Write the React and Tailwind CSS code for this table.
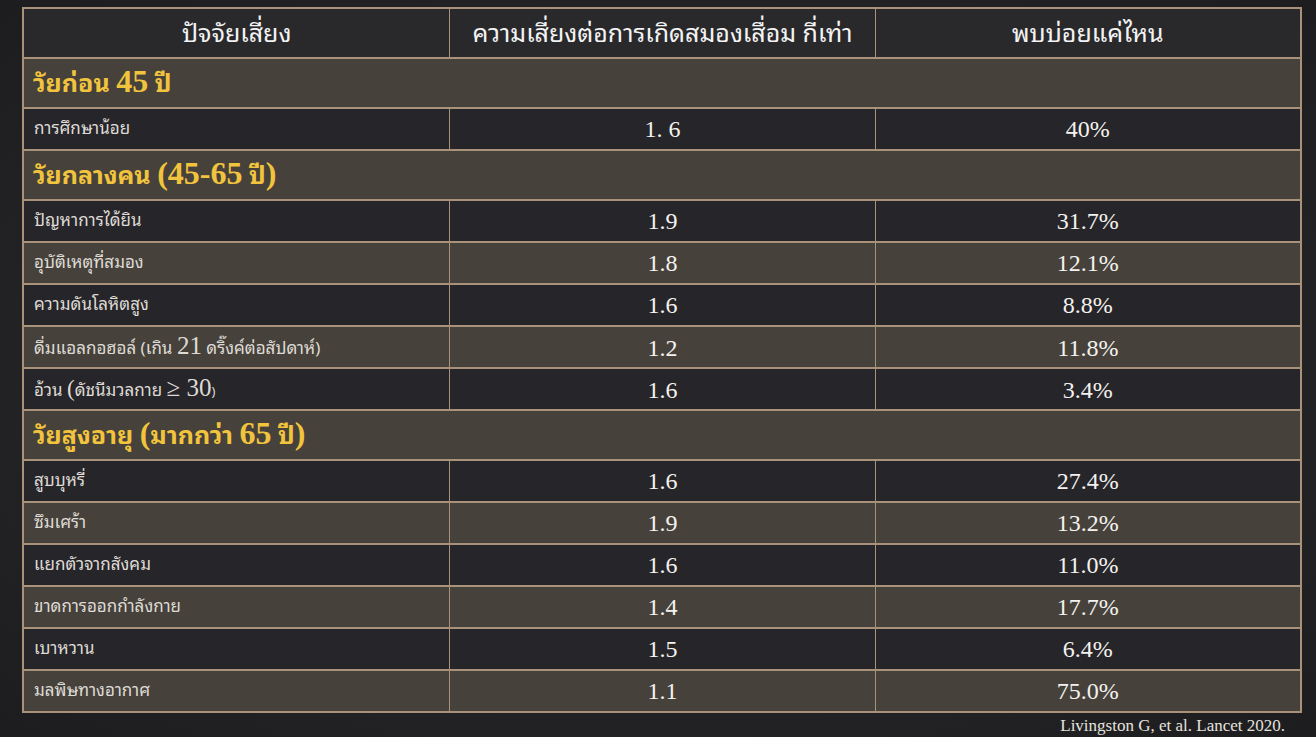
import React from "react";

const thai =
  "font-['Noto_Sans_Thai_Looped','Loma','Garuda','Waree','Tahoma','Noto_Sans_Thai','DejaVu_Sans',sans-serif]";
const serif = "font-['Liberation_Serif','Times_New_Roman',serif]";

function Num({ children, className = "" }) {
  return <span className={`${serif} ${className}`}>{children}</span>;
}

const rows = [
  {
    type: "section",
    label: (
      <>
        วัยก่อน <Num className="text-[32px] font-bold">45</Num> ปี
      </>
    ),
  },
  { label: "การศึกษาน้อย", risk: "1. 6", freq: "40%" },
  {
    type: "section",
    label: (
      <>
        วัยกลางคน <Num className="text-[32px] font-bold">(45-65</Num> ปี
        <Num className="text-[32px] font-bold">)</Num>
      </>
    ),
  },
  { label: "ปัญหาการได้ยิน", risk: "1.9", freq: "31.7%" },
  { label: "อุบัติเหตุที่สมอง", risk: "1.8", freq: "12.1%" },
  { label: "ความดันโลหิตสูง", risk: "1.6", freq: "8.8%" },
  {
    label: (
      <>
        ดื่มแอลกอฮอล์ (เกิน <Num className="text-[25px]">21</Num> ดริ๊งค์ต่อสัปดาห์)
      </>
    ),
    risk: "1.2",
    freq: "11.8%",
  },
  {
    label: (
      <>
        อ้วน <Num className="text-[23px]">(</Num>ดัชนีมวลกาย{" "}
        <Num className="text-[25px]">≥ 30</Num>
        <span className="text-[13px]">)</span>
      </>
    ),
    risk: "1.6",
    freq: "3.4%",
  },
  {
    type: "section",
    label: (
      <>
        วัยสูงอายุ <Num className="text-[32px] font-bold">(</Num>มากกว่า{" "}
        <Num className="text-[32px] font-bold">65</Num> ปี
        <Num className="text-[32px] font-bold">)</Num>
      </>
    ),
  },
  { label: "สูบบุหรี่", risk: "1.6", freq: "27.4%" },
  { label: "ซึมเศร้า", risk: "1.9", freq: "13.2%" },
  { label: "แยกตัวจากสังคม", risk: "1.6", freq: "11.0%" },
  { label: "ขาดการออกกำลังกาย", risk: "1.4", freq: "17.7%" },
  { label: "เบาหวาน", risk: "1.5", freq: "6.4%" },
  { label: "มลพิษทางอากาศ", risk: "1.1", freq: "75.0%" },
];

export default function App() {
  return (
    <div className="w-full h-[737px] bg-[radial-gradient(ellipse_at_center,#2a2a2c_0%,#222224_70%,#1d1d1f_100%)] pl-[22px] pt-[7px] overflow-hidden">
      <div className="w-[1280px] border-2 border-[#a8927a]">
        <div className="grid grid-cols-3 h-[48px] bg-[#29292c] text-[#f3f3f3] text-[25px]">
          <div className={`${thai} flex items-center justify-center pb-[3px]`}>ปัจจัยเสี่ยง</div>
          <div className={`${thai} flex items-center justify-center pb-[3px] border-l border-[#a8927a]`}>
            ความเสี่ยงต่อการเกิดสมองเสื่อม กี่เท่า
          </div>
          <div className={`${thai} flex items-center justify-center pb-[3px] border-l border-[#a8927a]`}>
            พบบ่อยแค่ไหน
          </div>
        </div>
        {rows.map((r, i) => {
          const bg = i % 2 === 0 ? "bg-[#46423b]" : "bg-[#262529]";
          if (r.type === "section") {
            return (
              <div
                key={i}
                className={`${bg} ${thai} h-[50px] border-t-2 border-[#a8927a] flex items-center pl-[9px] pb-[5px] text-[#f2c43e] text-[25px] font-bold`}
              >
                <span>{r.label}</span>
              </div>
            );
          }
          return (
            <div key={i} className={`${bg} grid grid-cols-3 h-[42px] border-t-2 border-[#a8927a]`}>
              <div className={`${thai} flex items-center pl-[10px] pb-[4px] text-[17px] text-[#dedad5]`}>
                <span>{r.label}</span>
              </div>
              <div className={`${serif} flex items-center justify-center border-l border-[#a8927a] text-[24px] text-[#f4f2ef]`}>
                {r.risk}
              </div>
              <div className={`${serif} flex items-center justify-center border-l border-[#a8927a] text-[24px] text-[#f4f2ef]`}>
                {r.freq}
              </div>
            </div>
          );
        })}
      </div>
      <div className="w-[1280px] flex justify-end pr-[17px]">
        <span className={`${serif} text-[17px] text-[#e6e3de]`}>Livingston G, et al. Lancet 2020.</span>
      </div>
    </div>
  );
}
